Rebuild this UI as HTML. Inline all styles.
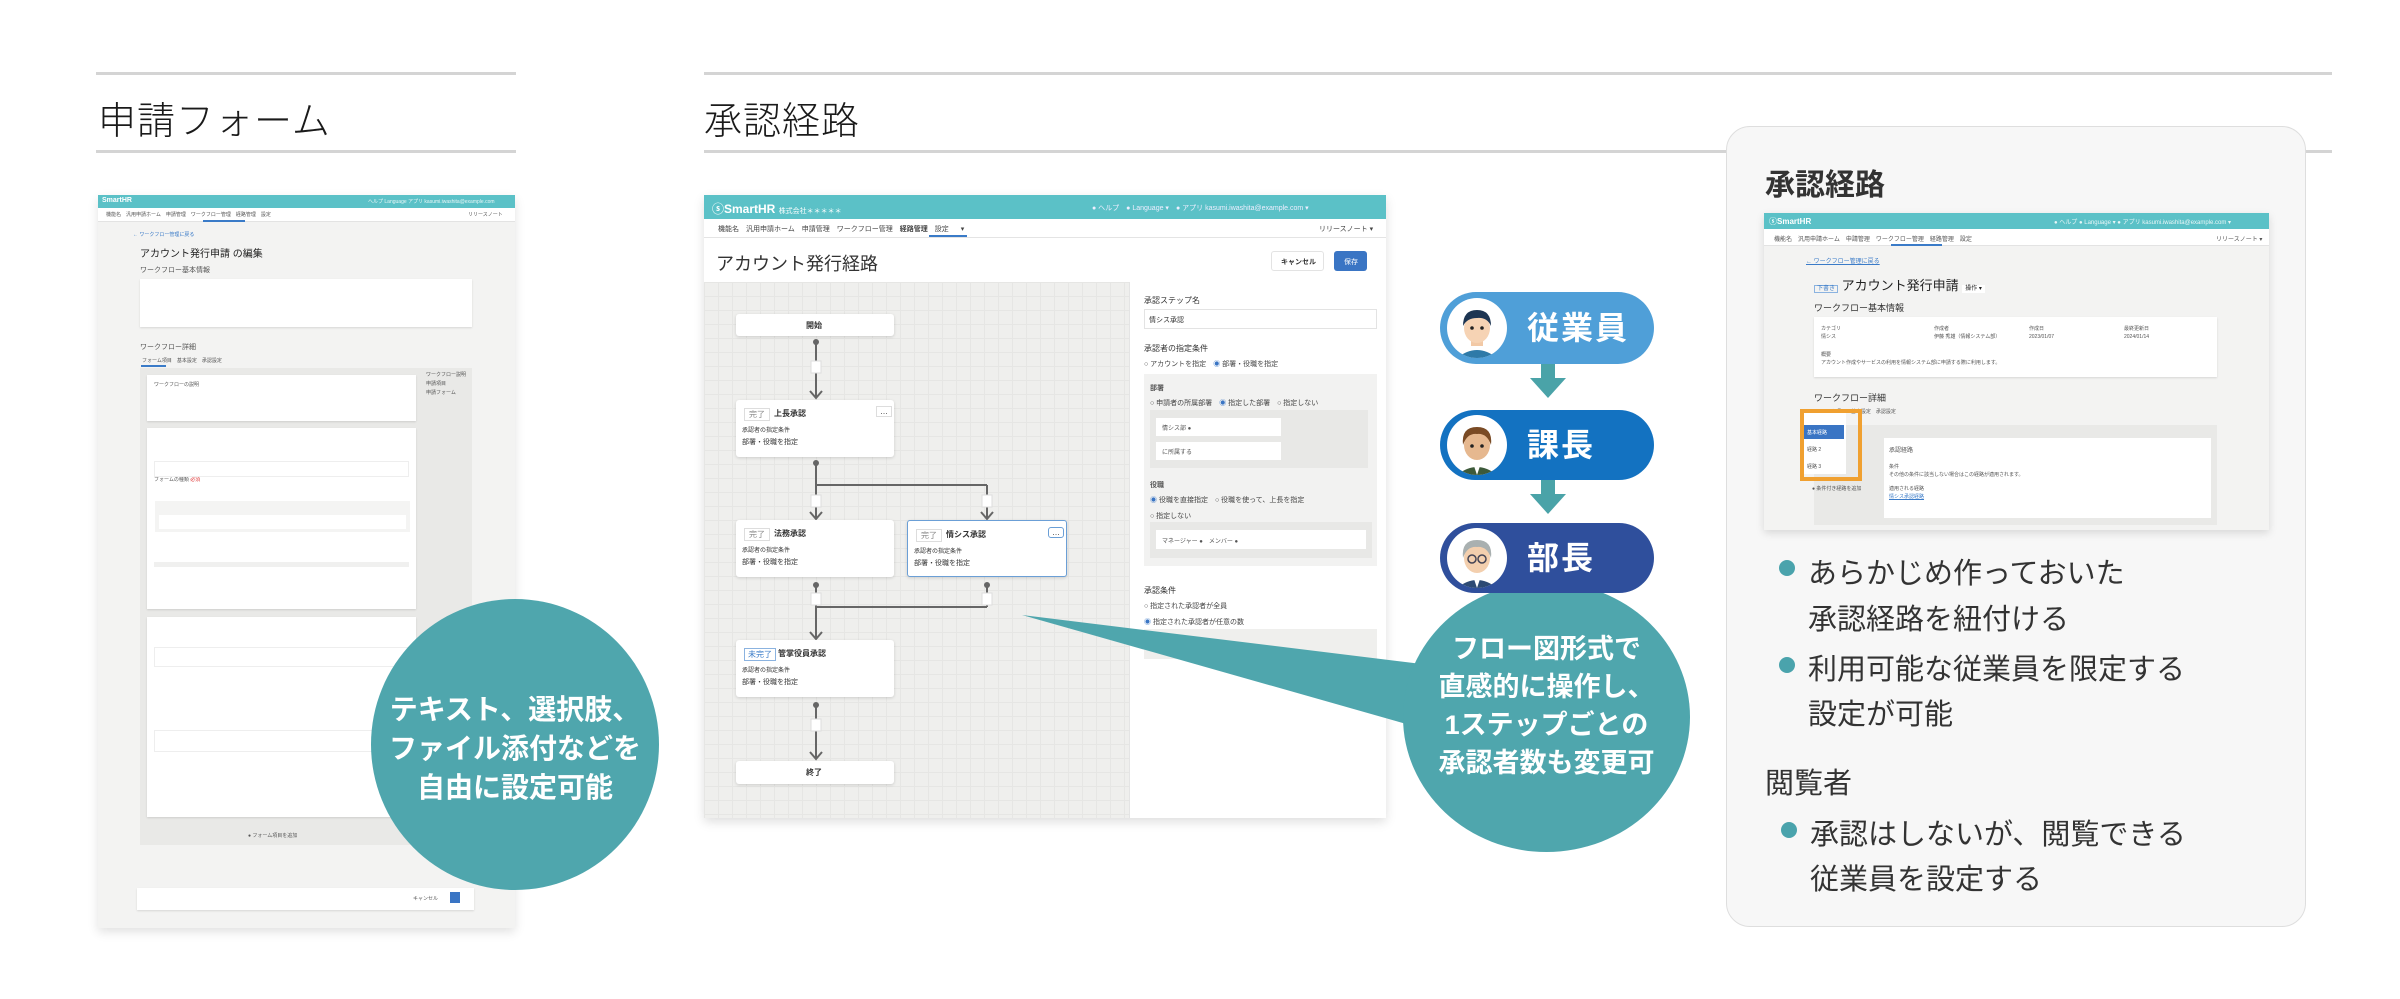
<!DOCTYPE html>
<html><head><meta charset="utf-8">
<style>
*{margin:0;padding:0;box-sizing:border-box}
body{width:2400px;height:999px;background:#fff;position:relative;overflow:hidden;font-family:"Liberation Sans","Noto Sans CJK JP",sans-serif;color:#222}
.a{position:absolute}
.line{position:absolute;height:3px;background:#d4d4d4}
.h1{position:absolute;font-size:38px;font-weight:300;color:#1a1a1a;letter-spacing:1px}
.t{position:absolute;font-size:7px;color:#555;white-space:nowrap}
.card{position:absolute;background:#fff;box-shadow:0 1px 2px rgba(0,0,0,.12)}
.node{position:absolute;background:#fff;box-shadow:0 1px 3px rgba(0,0,0,.15);border-radius:3px}
.nt{position:absolute;font-size:8px;color:#333;white-space:nowrap}
.pill{position:absolute;left:1440px;width:214px;border-radius:36px}
.av{position:absolute;left:7px;top:6px;width:60px;height:60px;border-radius:50%;background:#fff;overflow:hidden}
.pt{position:absolute;left:87px;top:0;font-size:32px;font-weight:bold;color:#fff;letter-spacing:2px}
.arr{position:absolute;left:1530px;width:36px;height:34px}
.bub{position:absolute;color:#fff;font-weight:bold;text-align:center;white-space:nowrap}
.li{position:absolute;left:1808px;font-size:29px;color:#333;white-space:nowrap}
.dot{position:absolute;left:1779px;width:16px;height:16px;border-radius:50%;background:#4aa3ac}
</style></head><body>

<div class="line" style="left:96px;top:72px;width:420px"></div>
<div class="line" style="left:96px;top:150px;width:420px"></div>
<div class="h1" style="left:98px;top:90px">申請フォーム</div>
<div class="line" style="left:704px;top:72px;width:1628px"></div>
<div class="line" style="left:704px;top:150px;width:1628px"></div>
<div class="h1" style="left:704px;top:90px">承認経路</div>

<!-- LEFT SCREENSHOT -->
<div class="a" style="left:98px;top:195px;width:417px;height:733px;background:#f3f3f2;box-shadow:0 4px 10px rgba(0,0,0,.12)">
  <div class="a" style="left:0;top:0;width:417px;height:13px;background:#5bc1c7"></div>
  <div class="t" style="left:4px;top:2px;color:#fff;font-size:7px;font-weight:bold">SmartHR</div>
  <div class="t" style="left:270px;top:3px;color:#e8f6f7;font-size:5px">ヘルプ  Language  アプリ kasumi.iwashita@example.com</div>
  <div class="a" style="left:0;top:13px;width:417px;height:14px;background:#fff;border-bottom:1px solid #e3e3e3"></div>
  <div class="t" style="left:8px;top:16px;font-size:5px">機能名　汎用申請ホーム　申請管理　ワークフロー管理　経路管理　設定</div>
  <div class="a" style="left:105px;top:25px;width:42px;height:2px;background:#3a7bc8"></div>
  <div class="t" style="left:370px;top:16px;font-size:5px">リリースノート</div>
  <div class="t" style="left:35px;top:36px;font-size:5px;color:#3a7bc8">← ワークフロー管理に戻る</div>
  <div class="t" style="left:42px;top:50px;font-size:10px;color:#222">アカウント発行申請 の編集</div>
  <div class="t" style="left:42px;top:70px;font-size:7px">ワークフロー基本情報</div>
  <div class="card" style="left:42px;top:84px;width:332px;height:48px"></div>
  <div class="t" style="left:42px;top:147px;font-size:7px">ワークフロー詳細</div>
  <div class="t" style="left:44px;top:162px;font-size:5px">フォーム項目　基本設定　承認設定</div>
  <div class="a" style="left:43px;top:170px;width:25px;height:2px;background:#3a7bc8"></div>
  <div class="a" style="left:42px;top:173px;width:332px;height:477px;background:#e9e9e7"></div>
  <div class="card" style="left:49px;top:180px;width:269px;height:46px"></div>
  <div class="t" style="left:56px;top:186px;font-size:5px">ワークフローの説明</div>
  <div class="card" style="left:49px;top:233px;width:269px;height:181px"></div>
  <div class="a" style="left:56px;top:367px;width:255px;height:5px;background:#f0f0ef"></div>
  <div class="t" style="left:56px;top:281px;font-size:5px">フォームの種類 <span style="color:#d33">必須</span></div>
  <div class="a" style="left:57px;top:306px;width:255px;height:31px;background:#f4f4f3"></div>
  <div class="a" style="left:61px;top:320px;width:247px;height:14px;background:#fff"></div>
  <div class="a" style="left:56px;top:266px;width:255px;height:16px;border:1px solid #eee;background:#fff"></div>
  <div class="card" style="left:49px;top:422px;width:269px;height:200px"></div>
  <div class="a" style="left:56px;top:452px;width:255px;height:20px;border:1px solid #eee"></div>
  <div class="a" style="left:56px;top:535px;width:255px;height:22px;border:1px solid #eee"></div>
  <div class="t" style="left:150px;top:637px;font-size:5px">● フォーム項目を追加</div>
  <div class="t" style="left:328px;top:176px;font-size:5px;line-height:9px">ワークフロー説明<br>申請項目<br>申請フォーム</div>
  <div class="card" style="left:39px;top:693px;width:337px;height:22px"></div>
  <div class="t" style="left:315px;top:700px;font-size:5px">キャンセル</div>
  <div class="a" style="left:352px;top:697px;width:10px;height:11px;background:#3a75c4"></div>
</div>

<!-- bubble 1 -->
<div class="a" style="left:371px;top:599px;width:288px;height:291px;border-radius:50%;background:#4fa6ad"></div>
<div class="bub" style="left:371px;top:690px;width:288px;font-size:28px;line-height:39px">テキスト、選択肢、<br>ファイル添付などを<br>自由に設定可能</div>

<!-- MIDDLE SCREENSHOT -->
<div class="a" style="left:704px;top:195px;width:682px;height:623px;background:#fff;box-shadow:0 4px 10px rgba(0,0,0,.13);overflow:hidden">
  <div class="a" style="left:0;top:0;width:682px;height:24px;background:#5bc1c7"></div>
  <div class="t" style="left:8px;top:5px;font-size:12px;font-weight:bold;color:#fff">ⓢSmartHR <span style="font-size:7px;font-weight:normal">株式会社＊＊＊＊＊</span></div>
  <div class="t" style="left:388px;top:8px;font-size:7px;color:#eef">● ヘルプ　● Language ▾　● アプリ kasumi.iwashita@example.com ▾</div>
  <div class="a" style="left:0;top:24px;width:682px;height:19px;border-bottom:1px solid #e4e4e4"></div>
  <div class="t" style="left:14px;top:29px;font-size:7px;color:#444;word-spacing:10px">機能名　汎用申請ホーム　申請管理　ワークフロー管理　<b>経路管理</b>　設定 ▾</div>
  <div class="a" style="left:225px;top:40px;width:38px;height:2px;background:#3a7bc8"></div>
  <div class="t" style="left:615px;top:29px;font-size:7px;color:#444">リリースノート ▾</div>
  <div class="t" style="left:12px;top:55px;font-size:18px;color:#333">アカウント発行経路</div>
  <div class="a" style="left:567px;top:56px;width:53px;height:20px;border:1px solid #e3e3e3;border-radius:3px"></div>
  <div class="t" style="left:577px;top:62px;font-size:7px;font-weight:bold;color:#333">キャンセル</div>
  <div class="a" style="left:630px;top:56px;width:33px;height:20px;background:#3a75c4;border-radius:3px"></div>
  <div class="t" style="left:640px;top:62px;font-size:7px;color:#fff">保存</div>
  <div class="a" style="left:0;top:87px;width:425px;height:536px;background-color:#efefed;background-image:linear-gradient(#e6e6e4 1px,transparent 1px),linear-gradient(90deg,#e6e6e4 1px,transparent 1px);background-size:14px 14px"></div>
  <svg class="a" style="left:0;top:0" width="425" height="623">
    <g stroke="#666" stroke-width="2" fill="none">
      <line x1="112" y1="146" x2="112" y2="202"/>
      <line x1="112" y1="268" x2="112" y2="323"/><line x1="112" y1="290" x2="283" y2="290"/><line x1="283" y1="290" x2="283" y2="323"/>
      <line x1="112" y1="390" x2="112" y2="443"/><line x1="283" y1="390" x2="283" y2="412"/><line x1="112" y1="412" x2="283" y2="412"/>
      <line x1="112" y1="510" x2="112" y2="563"/>
      <polyline points="106,196 112,203 118,196"/><polyline points="106,317 112,324 118,317"/><polyline points="277,317 283,324 289,317"/><polyline points="106,437 112,444 118,437"/><polyline points="106,557 112,564 118,557"/>
    </g>
    <g fill="#666"><circle cx="112" cy="147" r="3"/><circle cx="112" cy="268" r="3"/><circle cx="112" cy="390" r="3"/><circle cx="283" cy="390" r="3"/><circle cx="112" cy="510" r="3"/></g>
    <g fill="#fff" stroke="#ddd"><rect x="107" y="166" width="10" height="12"/><rect x="107" y="300" width="10" height="12"/><rect x="278" y="300" width="10" height="12"/><rect x="107" y="398" width="10" height="12"/><rect x="278" y="398" width="10" height="12"/><rect x="107" y="524" width="10" height="12"/></g>
  </svg>
  <div class="node" style="left:32px;top:119px;width:158px;height:22px"><div class="nt" style="left:70px;top:6px;font-weight:bold">開始</div></div>
  <div class="node" style="left:32px;top:205px;width:158px;height:57px"><div class="nt" style="left:8px;top:8px;color:#888;border:1px solid #ddd;padding:0 4px">完了</div><div class="nt" style="left:38px;top:8px;font-weight:bold">上長承認</div><div class="nt" style="left:6px;top:25px;font-size:6px">承認者の指定条件</div><div class="nt" style="left:6px;top:37px;font-size:7px">部署・役職を指定</div><div class="nt" style="left:140px;top:6px;border:1px solid #ddd;padding:0 3px">…</div></div>
  <div class="node" style="left:32px;top:325px;width:158px;height:57px"><div class="nt" style="left:8px;top:8px;color:#888;border:1px solid #ddd;padding:0 4px">完了</div><div class="nt" style="left:38px;top:8px;font-weight:bold">法務承認</div><div class="nt" style="left:6px;top:25px;font-size:6px">承認者の指定条件</div><div class="nt" style="left:6px;top:37px;font-size:7px">部署・役職を指定</div></div>
  <div class="node" style="left:203px;top:325px;width:160px;height:57px;border:1.5px solid #6b9fd6"><div class="nt" style="left:8px;top:8px;color:#888;border:1px solid #ddd;padding:0 4px">完了</div><div class="nt" style="left:38px;top:8px;font-weight:bold">情シス承認</div><div class="nt" style="left:6px;top:25px;font-size:6px">承認者の指定条件</div><div class="nt" style="left:6px;top:37px;font-size:7px">部署・役職を指定</div><div class="nt" style="left:140px;top:6px;border:1.5px solid #6b9fd6;padding:0 3px;border-radius:3px">…</div></div>
  <div class="node" style="left:32px;top:445px;width:158px;height:57px"><div class="nt" style="left:8px;top:8px;color:#3a7bc8;border:1px solid #8bb3e0;padding:0 3px">未完了</div><div class="nt" style="left:42px;top:8px;font-weight:bold">管掌役員承認</div><div class="nt" style="left:6px;top:25px;font-size:6px">承認者の指定条件</div><div class="nt" style="left:6px;top:37px;font-size:7px">部署・役職を指定</div></div>
  <div class="node" style="left:32px;top:566px;width:158px;height:23px"><div class="nt" style="left:70px;top:6px;font-weight:bold">終了</div></div>
  <div class="t" style="left:440px;top:100px;font-size:8px;color:#333">承認ステップ名</div>
  <div class="a" style="left:440px;top:114px;width:233px;height:20px;border:1px solid #e3e3e3"></div>
  <div class="t" style="left:445px;top:120px;font-size:7px;color:#333">情シス承認</div>
  <div class="t" style="left:440px;top:148px;font-size:8px;color:#333">承認者の指定条件</div>
  <div class="t" style="left:440px;top:164px;font-size:7px;color:#444">○ アカウントを指定　<span style="color:#3a75c4">◉</span> 部署・役職を指定</div>
  <div class="a" style="left:440px;top:179px;width:233px;height:192px;background:#f2f2f1"></div>
  <div class="t" style="left:446px;top:188px;font-size:7px;font-weight:bold">部署</div>
  <div class="t" style="left:446px;top:203px;font-size:7px;color:#444">○ 申請者の所属部署　<span style="color:#3a75c4">◉</span> 指定した部署　○ 指定しない</div>
  <div class="a" style="left:446px;top:215px;width:218px;height:58px;background:#e8e8e6"></div>
  <div class="a" style="left:452px;top:223px;width:125px;height:18px;background:#fff"></div>
  <div class="a" style="left:452px;top:247px;width:125px;height:18px;background:#fff"></div>
  <div class="t" style="left:458px;top:228px;font-size:6px">情シス部 ●</div>
  <div class="t" style="left:458px;top:252px;font-size:6px">に所属する</div>
  <div class="t" style="left:446px;top:285px;font-size:7px;font-weight:bold">役職</div>
  <div class="t" style="left:446px;top:300px;font-size:7px;color:#444"><span style="color:#3a75c4">◉</span> 役職を直接指定　○ 役職を使って、上長を指定</div>
  <div class="t" style="left:446px;top:316px;font-size:7px;color:#444">○ 指定しない</div>
  <div class="a" style="left:446px;top:327px;width:222px;height:36px;background:#e8e8e6"></div>
  <div class="a" style="left:452px;top:335px;width:210px;height:19px;background:#fff"></div>
  <div class="t" style="left:458px;top:341px;font-size:6px">マネージャー ●　メンバー ●</div>
  <div class="t" style="left:440px;top:390px;font-size:8px;color:#333">承認条件</div>
  <div class="t" style="left:440px;top:406px;font-size:7px;color:#444">○ 指定された承認者が全員</div>
  <div class="t" style="left:440px;top:422px;font-size:7px;color:#444"><span style="color:#3a75c4">◉</span> 指定された承認者が任意の数</div>
  <div class="a" style="left:440px;top:434px;width:233px;height:30px;background:#efefed"></div>
  <div class="a" style="left:425px;top:87px;width:1px;height:536px;background:#e4e4e4"></div>
</div>

<!-- bubble 2 -->
<svg class="a" style="left:0;top:0" width="2400" height="999">
  <polygon points="1022,615 1430,665 1410,725" fill="#4fa6ad"/>
</svg>
<div class="a" style="left:1403px;top:582px;width:287px;height:270px;border-radius:50%;background:#4fa6ad"></div>
<div class="bub" style="left:1403px;top:630px;width:287px;font-size:27px;line-height:38px">フロー図形式で<br>直感的に操作し、<br>1ステップごとの<br>承認者数も変更可</div>

<!-- persons -->
<div class="pill" style="top:292px;height:72px;background:#4f9fd8">
  <div class="av"><svg width="60" height="60"><path d="M10 60 Q30 44 50 60Z" fill="#2e7aa8"/><rect x="24" y="40" width="12" height="8" fill="#f2c9a6"/><ellipse cx="30" cy="30" rx="13" ry="15" fill="#f6d3b4"/><path d="M16 28 Q16 12 30 12 Q44 12 44 28 Q40 19 30 20 Q20 20 16 28Z" fill="#1d3552"/><circle cx="25" cy="30" r="1.8" fill="#222"/><circle cx="35" cy="30" r="1.8" fill="#222"/></svg></div>
  <div class="pt" style="line-height:72px">従業員</div>
</div>
<div class="arr" style="top:364px"><svg width="36" height="34"><rect x="11" y="0" width="14" height="16" fill="#4aa3a8"/><polygon points="0,14 36,14 18,34" fill="#4aa3a8"/></svg></div>
<div class="pill" style="top:410px;height:70px;background:#1372c1">
  <div class="av" style="top:5px"><svg width="60" height="60"><path d="M10 60 Q30 44 50 60Z" fill="#3d5a3a"/><polygon points="26,48 34,48 30,60" fill="#fff"/><ellipse cx="30" cy="30" rx="13" ry="15" fill="#e6b88f"/><path d="M16 30 Q14 12 30 12 Q46 12 44 30 Q40 18 30 19 Q20 18 16 30Z" fill="#7a4b25"/><circle cx="25" cy="31" r="1.8" fill="#222"/><circle cx="35" cy="31" r="1.8" fill="#222"/></svg></div>
  <div class="pt" style="line-height:70px">課長</div>
</div>
<div class="arr" style="top:480px"><svg width="36" height="34"><rect x="11" y="0" width="14" height="16" fill="#4aa3a8"/><polygon points="0,14 36,14 18,34" fill="#4aa3a8"/></svg></div>
<div class="pill" style="top:523px;height:70px;background:#2f4f9c">
  <div class="av" style="top:5px"><svg width="60" height="60"><path d="M10 60 Q30 44 50 60Z" fill="#2d4a74"/><polygon points="26,48 34,48 30,60" fill="#fff"/><ellipse cx="30" cy="30" rx="13" ry="15" fill="#f3cfae"/><path d="M16 30 Q14 12 30 12 Q46 12 44 30 Q40 18 30 19 Q20 18 16 30Z" fill="#a9b0b0"/><circle cx="25" cy="31" r="4" fill="none" stroke="#445" stroke-width="1.5"/><circle cx="35" cy="31" r="4" fill="none" stroke="#445" stroke-width="1.5"/></svg></div>
  <div class="pt" style="line-height:70px">部長</div>
</div>

<!-- RIGHT BOX -->
<div class="a" style="left:1726px;top:126px;width:580px;height:801px;border-radius:24px;background:#f7f7f7;border:1.5px solid #dedede"></div>
<div class="a" style="left:1765px;top:160px;font-size:30px;font-weight:bold;color:#333">承認経路</div>
<div class="a" style="left:1764px;top:213px;width:505px;height:317px;background:#f3f3f2;box-shadow:0 3px 8px rgba(0,0,0,.13)">
  <div class="a" style="left:0;top:0;width:505px;height:16px;background:#5bc1c7"></div>
  <div class="t" style="left:5px;top:3px;color:#fff;font-size:8px;font-weight:bold">ⓢSmartHR</div>
  <div class="t" style="left:290px;top:4px;color:#e8f6f7;font-size:6px">● ヘルプ ● Language ▾ ● アプリ kasumi.iwashita@example.com ▾</div>
  <div class="a" style="left:0;top:16px;width:505px;height:17px;background:#fff;border-bottom:1px solid #e3e3e3"></div>
  <div class="t" style="left:10px;top:21px;font-size:6px;word-spacing:6px">機能名　汎用申請ホーム　申請管理　ワークフロー管理　経路管理　設定</div>
  <div class="a" style="left:127px;top:31px;width:51px;height:2px;background:#3a7bc8"></div>
  <div class="t" style="left:452px;top:21px;font-size:6px">リリースノート ▾</div>
  <div class="t" style="left:42px;top:43px;font-size:6px;color:#3a7bc8;text-decoration:underline">← ワークフロー管理に戻る</div>
  <div class="t" style="left:50px;top:62px;font-size:13px;color:#222"><span style="font-size:6px;border:1px solid #8bb3e0;color:#3a7bc8;padding:0 2px">下書き</span> アカウント発行申請 <span style="font-size:6px;background:#fff;padding:1px 3px">操作 ▾</span></div>
  <div class="t" style="left:50px;top:88px;font-size:9px;color:#333">ワークフロー基本情報</div>
  <div class="card" style="left:50px;top:104px;width:403px;height:60px"></div>
  <div class="t" style="left:57px;top:112px;font-size:5px;line-height:8px">カテゴリ<br>情シス</div>
  <div class="t" style="left:170px;top:112px;font-size:5px;line-height:8px">作成者<br>伊藤 秀雄（情報システム部）</div>
  <div class="t" style="left:265px;top:112px;font-size:5px;line-height:8px">作成日<br>2023/01/07</div>
  <div class="t" style="left:360px;top:112px;font-size:5px;line-height:8px">最終更新日<br>2024/01/14</div>
  <div class="t" style="left:57px;top:138px;font-size:5px;line-height:8px">概要<br>アカウント作成やサービスの利用を情報システム部に申請する際に利用します。</div>
  <div class="t" style="left:50px;top:178px;font-size:9px;color:#333">ワークフロー詳細</div>
  <div class="t" style="left:52px;top:195px;font-size:5px">フォーム項目　基本設定　承認設定</div>
  <div class="a" style="left:50px;top:212px;width:403px;height:100px;background:#e9e9e7"></div>
  <div class="a" style="left:120px;top:225px;width:327px;height:80px;background:#fff"></div>
  <div class="t" style="left:125px;top:232px;font-size:6px">承認経路</div>
  <div class="t" style="left:125px;top:250px;font-size:5px;line-height:8px">条件<br>その他の条件に該当しない場合はこの経路が適用されます。</div>
  <div class="t" style="left:125px;top:272px;font-size:5px;line-height:8px">適用される経路<br><span style="color:#3a7bc8;text-decoration:underline">情シス承認経路</span></div>
  <div class="t" style="left:48px;top:272px;font-size:5px">● 条件付き経路を追加</div>
  <div class="a" style="left:38px;top:197px;width:44px;height:64px;background:#fff"></div>
  <div class="a" style="left:40px;top:212px;width:40px;height:14px;background:#3a75c4"></div>
  <div class="t" style="left:43px;top:216px;font-size:5px;color:#fff">基本経路</div>
  <div class="t" style="left:43px;top:233px;font-size:5px">経路 2</div>
  <div class="t" style="left:43px;top:250px;font-size:5px">経路 3</div>
  <div class="a" style="left:36px;top:196px;width:62px;height:72px;border:4px solid #f0a030"></div>
</div>
<div class="dot" style="top:560px"></div><div class="li" style="top:550px">あらかじめ作っておいた</div>
<div class="li" style="top:596px">承認経路を紐付ける</div>
<div class="dot" style="top:657px"></div><div class="li" style="top:646px">利用可能な従業員を限定する</div>
<div class="li" style="top:691px">設定が可能</div>
<div class="a" style="left:1765px;top:760px;font-size:29px;color:#333">閲覧者</div>
<div class="dot" style="top:822px;left:1781px"></div><div class="li" style="top:811px;left:1810px">承認はしないが、閲覧できる</div>
<div class="li" style="top:856px;left:1810px">従業員を設定する</div>
</body></html>
